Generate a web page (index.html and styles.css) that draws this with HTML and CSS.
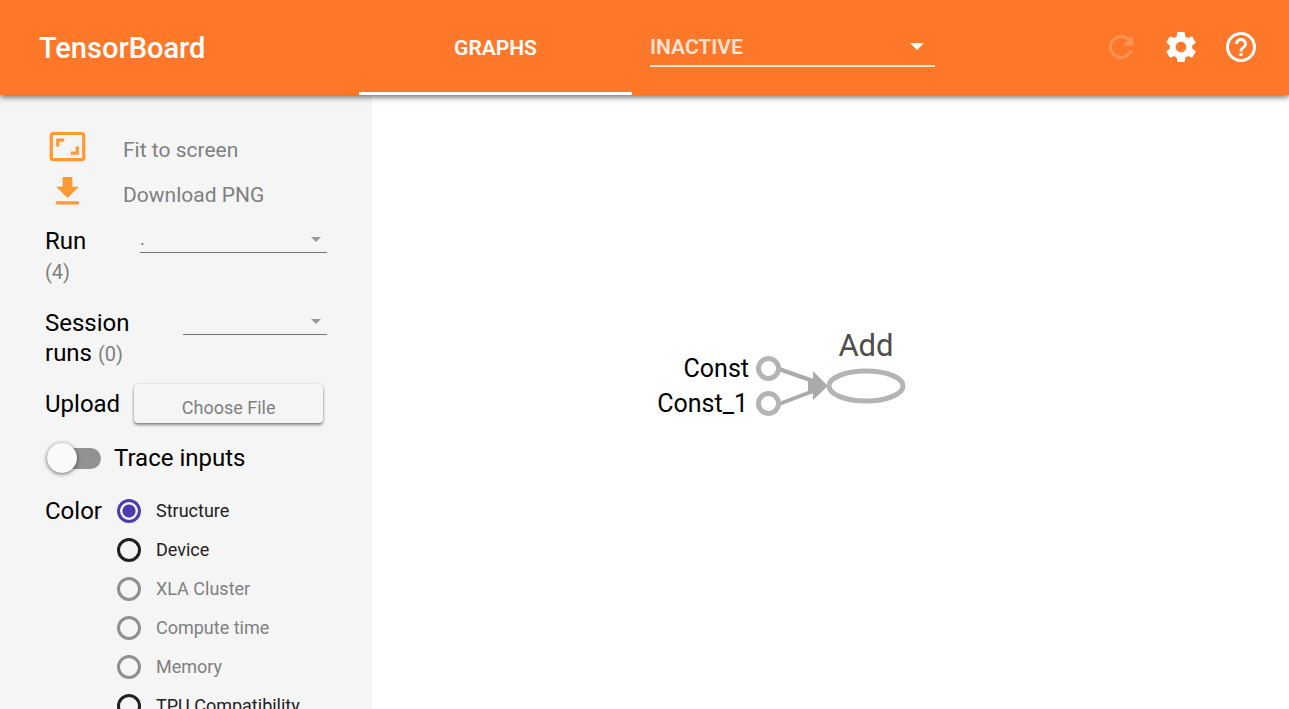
FILE: index.html
```html
<!DOCTYPE html>
<html lang="en">
<head>
<meta charset="utf-8">
<title>TensorBoard</title>
<link rel="stylesheet" href="styles.css">
</head>
<body>
<header class="toolbar">
  <h1 class="brand">TensorBoard</h1>
  <nav class="tabs"><a class="tab" href="#graphs">GRAPHS</a></nav>
  <div class="select-box inactive">
    <select aria-label="Inactive dashboards"><option>INACTIVE</option></select>
    <svg class="caret" viewBox="0 0 14 7" aria-hidden="true"><path d="M0 0h14L7 7z"/></svg>
  </div>
  <div class="actions">
    <button type="button" aria-label="Reload" disabled><svg viewBox="0 0 24 24"><path d="M17.65 6.35C16.2 4.9 14.21 4 12 4c-4.42 0-7.99 3.58-7.99 8s3.57 8 7.99 8c3.73 0 6.84-2.55 7.73-6h-2.08c-.82 2.33-3.04 4-5.65 4-3.31 0-6-2.69-6-6s2.69-6 6-6c1.66 0 3.14.69 4.22 1.78L13 11h7V4l-2.35 2.35z"/></svg></button>
    <button type="button" aria-label="Settings"><svg viewBox="0 0 24 24"><path d="M19.43 12.98c.04-.32.07-.64.07-.98s-.03-.66-.07-.98l2.11-1.65c.19-.15.24-.42.12-.64l-2-3.46c-.12-.22-.39-.3-.61-.22l-2.49 1c-.52-.4-1.08-.73-1.69-.98l-.38-2.65C14.46 2.18 14.25 2 14 2h-4c-.25 0-.46.18-.49.42l-.38 2.65c-.61.25-1.17.59-1.69.98l-2.49-1c-.23-.09-.49 0-.61.22l-2 3.46c-.13.22-.07.49.12.64l2.11 1.65c-.04.32-.07.65-.07.98s.03.66.07.98l-2.11 1.65c-.19.15-.24.42-.12.64l2 3.46c.12.22.39.3.61.22l2.49-1c.52.4 1.08.73 1.69.98l.38 2.65c.03.24.24.42.49.42h4c.25 0 .46-.18.49-.42l.38-2.65c.61-.25 1.17-.59 1.69-.98l2.49 1c.23.09.49 0 .61-.22l2-3.46c.12-.22.07-.49-.12-.64l-2.11-1.65zM12 15.5c-1.93 0-3.5-1.57-3.5-3.5s1.57-3.5 3.5-3.5 3.5 1.57 3.5 3.5-1.57 3.5-3.5 3.5z"/></svg></button>
    <button type="button" aria-label="Help"><svg viewBox="0 0 24 24"><path d="M11 18h2v-2h-2v2zm1-16C6.48 2 2 6.48 2 12s4.48 10 10 10 10-4.48 10-10S17.52 2 12 2zm0 18c-4.41 0-8-3.59-8-8s3.59-8 8-8 8 3.59 8 8-3.59 8-8 8zm0-14c-2.21 0-4 1.79-4 4h2c0-1.1.9-2 2-2s2 .9 2 2c0 2-3 1.75-3 5h2c0-2.25 3-2.5 3-5 0-2.21-1.79-4-4-4z"/></svg></button>
  </div>
</header>
<div class="content">
  <aside class="sidebar">
    <button class="command" type="button"><svg viewBox="0 0 24 24"><path d="M19 12h-2v3h-3v2h5v-5zM7 9h3V7H5v5h2V9zm14-6H3c-1.1 0-2 .9-2 2v14c0 1.1.9 2 2 2h18c1.1 0 2-.9 2-2V5c0-1.1-.9-2-2-2zm0 16.01H3V4.99h18v14.02z"/></svg><span>Fit to screen</span></button>
    <button class="command" type="button"><svg viewBox="0 0 24 24"><path d="M19 9h-4V3H9v6H5l7 7 7-7zM5 18v2h14v-2H5z"/></svg><span>Download PNG</span></button>
    <div class="field run">
      <label for="run">Run <small>(4)</small></label>
      <div class="select-box">
        <select id="run"><option>.</option></select>
        <svg class="caret" viewBox="0 0 10 5" aria-hidden="true"><path d="M0 0h10L5 5z"/></svg>
      </div>
    </div>
    <div class="field session">
      <label for="session">Session runs <small>(0)</small></label>
      <div class="select-box">
        <select id="session"><option></option></select>
        <svg class="caret" viewBox="0 0 10 5" aria-hidden="true"><path d="M0 0h10L5 5z"/></svg>
      </div>
    </div>
    <div class="upload"><span id="upload">Upload</span><button type="button" aria-describedby="upload">Choose File</button></div>
    <label class="trace"><input type="checkbox" role="switch"><span>Trace inputs</span></label>
    <fieldset class="color" aria-labelledby="color">
      <span class="color-title" id="color">Color</span>
      <div class="options">
        <label><input type="radio" name="color" checked>Structure</label>
        <label><input type="radio" name="color">Device</label>
        <label><input type="radio" name="color" disabled>XLA Cluster</label>
        <label><input type="radio" name="color" disabled>Compute time</label>
        <label><input type="radio" name="color" disabled>Memory</label>
        <label><input type="radio" name="color">TPU Compatibility</label>
      </div>
    </fieldset>
  </aside>
  <main class="graph">
    <svg viewBox="0 0 917 614" role="img" aria-label="Graph">
      <g class="edges">
        <path d="M407 274L444 287M407 309L444 295"/>
        <path class="arrow" d="M441 276L456 291L441 305L441 299L436 296V286L441 284z"/>
      </g>
      <g class="nodes">
        <circle cx="396.5" cy="273.5" r="10"/>
        <circle cx="396.5" cy="308.5" r="10"/>
        <ellipse cx="494" cy="291" rx="37" ry="15"/>
      </g>
      <text class="const" x="377" y="282">Const</text>
      <text class="const" x="376" y="317">Const_1</text>
      <text class="op" x="494" y="261">Add</text>
    </svg>
  </main>
</div>
</body>
</html>
```
FILE: styles.css
```css
* { box-sizing: border-box; }
body {
  margin: 0;
  height: 100vh;
  display: flex;
  flex-direction: column;
  overflow: hidden;
  font-family: Roboto, "Liberation Sans", sans-serif;
  color: #000;
}
button, select { font: inherit; color: inherit; border: 0; background: none; padding: 0; margin: 0; }
select { appearance: none; width: 100%; outline: 0; opacity: 1; }
svg { display: block; fill: currentColor; }

.toolbar {
  display: flex;
  align-items: center;
  height: 95px;
  flex: none;
  padding: 0 18px 0 39px;
  background: #ff782a;
  color: #fff;
  box-shadow: 0 2px 6px rgba(0, 0, 0, .6);
  z-index: 1;
}
.brand { width: 320px; margin: 0; font-size: 29px; font-weight: 500; }
.tabs { align-self: stretch; display: flex; }
.tab {
  display: flex;
  align-items: center;
  justify-content: center;
  width: 273px;
  padding-top: 3px;
  border-bottom: 3px solid #fff;
  color: inherit;
  font-size: 21px;
  font-weight: 600;
  text-decoration: none;
}
.select-box { display: flex; align-items: center; border-bottom: 1px solid #737373; }
.caret { flex: none; pointer-events: none; }
.inactive {
  width: 285px;
  height: 39px;
  margin-left: 18px;
  padding-right: 11px;
  border-bottom: 2px solid #ffe4d4;
  font-size: 21px;
  font-weight: 600;
}
.inactive select { color: #ffe4d4; }
.inactive .caret { width: 14px; }
.actions { display: flex; margin-left: auto; padding-bottom: 1px; }
.actions button { display: flex; justify-content: center; width: 60px; }
.actions svg { width: 36px; }
.actions button:disabled { opacity: .2; }

.content { display: flex; flex: 1; min-height: 0; }
.sidebar {
  width: 372px;
  flex: none;
  padding: 29px 45px 0;
  background: #f5f5f5;
  overflow: hidden;
  font-size: 24px;
  line-height: 30px;
}
.command {
  display: flex;
  align-items: center;
  gap: 36px;
  width: 100%;
  height: 45px;
  padding-left: 3px;
  color: #808080;
  font-size: 21px;
}
.command svg { width: 39px; color: #ff9933; }
.command span { padding-top: 6px; }
.field { display: flex; align-items: flex-start; justify-content: space-between; }
.field small { color: #808080; font-size: 20px; }
.run { margin-top: 12px; }
.run label { width: 60px; }
.session { margin-top: 21px; }
.session label { width: 100px; }
.field .select-box { height: 27px; padding-right: 6px; }
.run .select-box { width: 187px; }
.session .select-box { width: 144px; }
.field select { color: #737373; font-size: 18px; }
.field .caret { width: 10px; color: #999; }
.upload { display: flex; align-items: center; gap: 14px; margin-top: 15px; }
.upload button {
  width: 189px;
  height: 39px;
  padding-top: 8px;
  border-radius: 4px;
  color: #808080;
  font-size: 18px;
  background: #f5f5f5;
  box-shadow: 0 2px 3px rgba(0, 0, 0, .45), 0 0 2px rgba(0, 0, 0, .15);
}
.trace { display: flex; align-items: center; gap: 13px; margin-top: 20px; }
.trace input {
  appearance: none;
  display: flex;
  align-items: center;
  width: 54px;
  height: 21px;
  margin: 0 0 0 2px;
  border-radius: 11px;
  background: #929292;
}
.trace input::before {
  content: "";
  width: 30px;
  height: 30px;
  flex: none;
  border-radius: 50%;
  background: #fafafa;
  box-shadow: 0 1px 4px rgba(0, 0, 0, .6);
}
.trace input:checked { justify-content: flex-end; }
.color { display: flex; gap: 15px; margin: 18px 0 0; padding: 0; border: 0; }
.color-title { padding-top: 5px; }
.options label { display: flex; align-items: center; gap: 15px; height: 39px; font-size: 18px; color: #212121; white-space: nowrap; }
.options input {
  appearance: none;
  width: 24px;
  height: 24px;
  margin: 0;
  border: 3px solid #212121;
  border-radius: 50%;
}
.options input:checked { border-color: #4e3bb0; background: radial-gradient(circle, #4e3bb0 6px, transparent 7px); }
.options input:disabled { border-color: #909090; }
.options label:has(input:disabled) { color: #808080; }

.graph { flex: 1; min-width: 0; background: #fff; }
.graph svg { width: 100%; height: 100%; }
.edges { stroke: #a9aaa9; stroke-width: 4; }
.arrow { fill: #a9aaa9; stroke: none; }
.nodes { fill: #fff; stroke: #b3b4b3; stroke-width: 5; }
.const { font-size: 25px; text-anchor: end; }
.op { font-size: 31px; text-anchor: middle; fill: #4d4d4d; }
```
